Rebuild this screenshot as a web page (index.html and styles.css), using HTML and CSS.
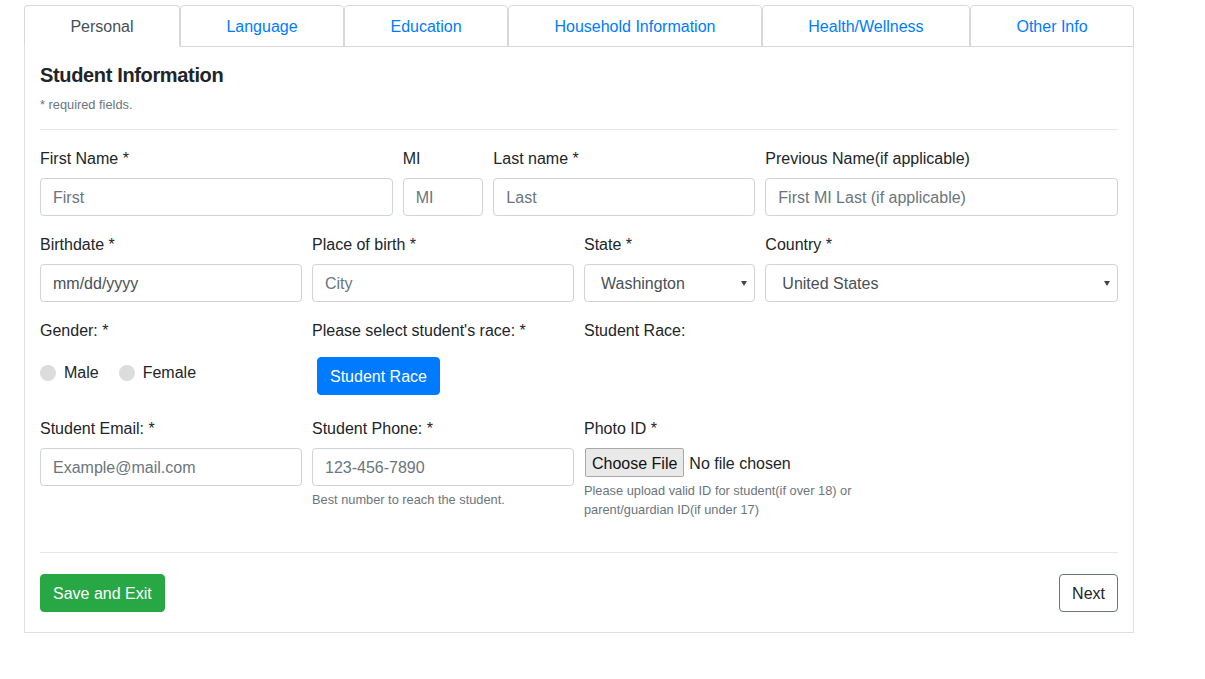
FILE: index.html
```html
<!DOCTYPE html>
<html lang="en">
<head>
<meta charset="utf-8">
<title>Student Information</title>
<link rel="stylesheet" href="styles.css">
</head>
<body>
<div class="page">
  <ul class="tabs">
    <li class="tab active">Personal</li>
    <li class="tab">Language</li>
    <li class="tab">Education</li>
    <li class="tab">Household Information</li>
    <li class="tab">Health/Wellness</li>
    <li class="tab">Other Info</li>
  </ul>
  <div class="card">
    <h5 class="title">Student Information</h5>
    <p class="req">* required fields.</p>
    <hr class="divider">
    <div class="grid">
      <div class="field span4"><label>First Name *</label><input class="control" type="text" placeholder="First"></div>
      <div class="field span1"><label>MI</label><input class="control" type="text" placeholder="MI"></div>
      <div class="field span3"><label>Last name *</label><input class="control" type="text" placeholder="Last"></div>
      <div class="field span4"><label>Previous Name(if applicable)</label><input class="control" type="text" placeholder="First MI Last (if applicable)"></div>

      <div class="field span3"><label>Birthdate *</label><input class="control" type="text" value="mm/dd/yyyy"></div>
      <div class="field span3"><label>Place of birth *</label><input class="control" type="text" placeholder="City"></div>
      <div class="field span2"><label>State *</label><div class="select-wrap"><select class="control select"><option>Washington</option></select></div></div>
      <div class="field span4"><label>Country *</label><div class="select-wrap"><select class="control select"><option>United States</option></select></div></div>

      <div class="field span3"><label>Gender: *</label>
        <div class="radios">
          <label class="radio"><input type="radio" name="gender"><span>Male</span></label>
          <label class="radio"><input type="radio" name="gender"><span>Female</span></label>
        </div>
      </div>
      <div class="field span3"><label>Please select student's race: *</label><button class="btn btn-primary race-btn" type="button">Student Race</button></div>
      <div class="field span6"><label>Student Race:</label></div>

      <div class="field span3"><label>Student Email: *</label><input class="control" type="email" placeholder="Example@mail.com"></div>
      <div class="field span3"><label>Student Phone: *</label><input class="control" type="text" placeholder="123-456-7890"><small class="help">Best number to reach the student.</small></div>
      <div class="field span4"><label>Photo ID *</label><input class="file" type="file"><small class="help">Please upload valid ID for student(if over 18) or parent/guardian ID(if under 17)</small></div>
    </div>
    <hr class="divider bottom">
    <div class="actions">
      <button class="btn btn-success" type="button">Save and Exit</button>
      <button class="btn btn-outline" type="button">Next</button>
    </div>
  </div>
</div>
</body>
</html>
```

FILE: styles.css
```css
* { box-sizing: border-box; }

body {
  margin: 0;
  font-family: "Liberation Sans", Arial, sans-serif;
  font-size: 16px;
  line-height: 1.5;
  color: #212529;
  background: #fff;
}

.page {
  width: 1110px;
  margin-left: 24px;
  padding-top: 5px;
}

.tabs {
  display: flex;
  list-style: none;
  margin: 0;
  padding: 0;
  border-bottom: 1px solid #d6d9dc;
}

.tab {
  flex: 1 1 auto;
  text-align: center;
  padding: 9px 16px 7px;
  line-height: 24px;
  border: 1px solid #d6d9dc;
  border-top-left-radius: 4px;
  border-top-right-radius: 4px;
  margin-bottom: -1px;
  color: #007bff;
  background: #fff;
}

.tab.active {
  color: #495057;
  border-bottom-color: #fff;
}

.card {
  border: 1px solid #dfdfdf;
  border-top: 0;
  padding: 15px 15px 20px;
}

.title {
  margin: 0 0 8px;
  padding-top: 1px;
  height: 24px;
  font-size: 20px;
  font-weight: 600;
  line-height: 24px;
  letter-spacing: -0.35px;
  color: #212529;
}

.req {
  margin: 0;
  padding-top: 1px;
  height: 19px;
  font-size: 12.8px;
  line-height: 19px;
  color: #6c757d;
}

.divider {
  margin: 16px 0;
  border: 0;
  border-top: 1px solid #e6e6e6;
  height: 0;
}

.divider.bottom {
  margin-top: 17px;
}

.grid {
  display: grid;
  grid-template-columns: repeat(12, 1fr);
  column-gap: 10px;
  align-items: start;
}

.field { margin-bottom: 16px; min-width: 0; }
.span1 { grid-column: span 1; }
.span2 { grid-column: span 2; }
.span3 { grid-column: span 3; }
.span4 { grid-column: span 4; }
.span6 { grid-column: span 6; }

.field > label {
  display: block;
  margin-bottom: 8px;
  padding-top: 1px;
  height: 24px;
  line-height: 24px;
}

.control {
  display: block;
  width: 100%;
  height: 38px;
  padding: 7px 12px 5px;
  font-family: inherit;
  font-size: 16px;
  line-height: 24px;
  color: #495057;
  background: #fff;
  border: 1px solid #ced4da;
  border-radius: 4px;
  outline: none;
}

.control::placeholder { color: #6c757d; opacity: 1; }

.select-wrap { position: relative; }

.select {
  appearance: none;
  -webkit-appearance: none;
  padding-left: 16px;
  padding-right: 28px;
}

.select-wrap::after {
  content: "";
  position: absolute;
  right: 8px;
  top: 17px;
  border-left: 3px solid transparent;
  border-right: 3px solid transparent;
  border-top: 5px solid #444;
  pointer-events: none;
}

.radios {
  display: flex;
  padding-top: 11px;
}

.radio {
  display: flex;
  align-items: center;
  margin-right: 20px;
  line-height: 24px;
}

.radio input {
  appearance: none;
  -webkit-appearance: none;
  width: 16px;
  height: 16px;
  margin: 0 8px 0 0;
  border-radius: 50%;
  background: #dcdcdc;
  border: 0;
}

.btn {
  display: inline-block;
  padding: 7px 12px 5px;
  font-family: inherit;
  font-size: 16px;
  line-height: 24px;
  border: 1px solid transparent;
  border-radius: 4px;
  cursor: pointer;
}

.btn-primary { background: #007bff; border-color: #007bff; color: #fff; }
.btn-success { background: #28a745; border-color: #28a745; color: #fff; }
.btn-outline { background: #fff; border-color: #6c757d; color: #212529; }

.race-btn { margin: 7px 0 5px 5px; }

.file {
  display: block;
  width: 100%;
  font-family: inherit;
  font-size: 16px;
  line-height: 23px;
  color: #212529;
}

.file::file-selector-button {
  font-family: inherit;
  font-size: 16px;
  line-height: 23px;
  padding: 3px 6px 1px;
  margin: 0 5px 0 1px;
  border: 1px solid #a9a9a9;
  border-radius: 2px;
  background: #e9e9e9;
  color: #111;
}

.help {
  display: block;
  margin-top: 4px;
  font-size: 12.8px;
  line-height: 19px;
  color: #6c757d;
}

.actions {
  display: flex;
  justify-content: space-between;
  padding-top: 5px;
}
```
